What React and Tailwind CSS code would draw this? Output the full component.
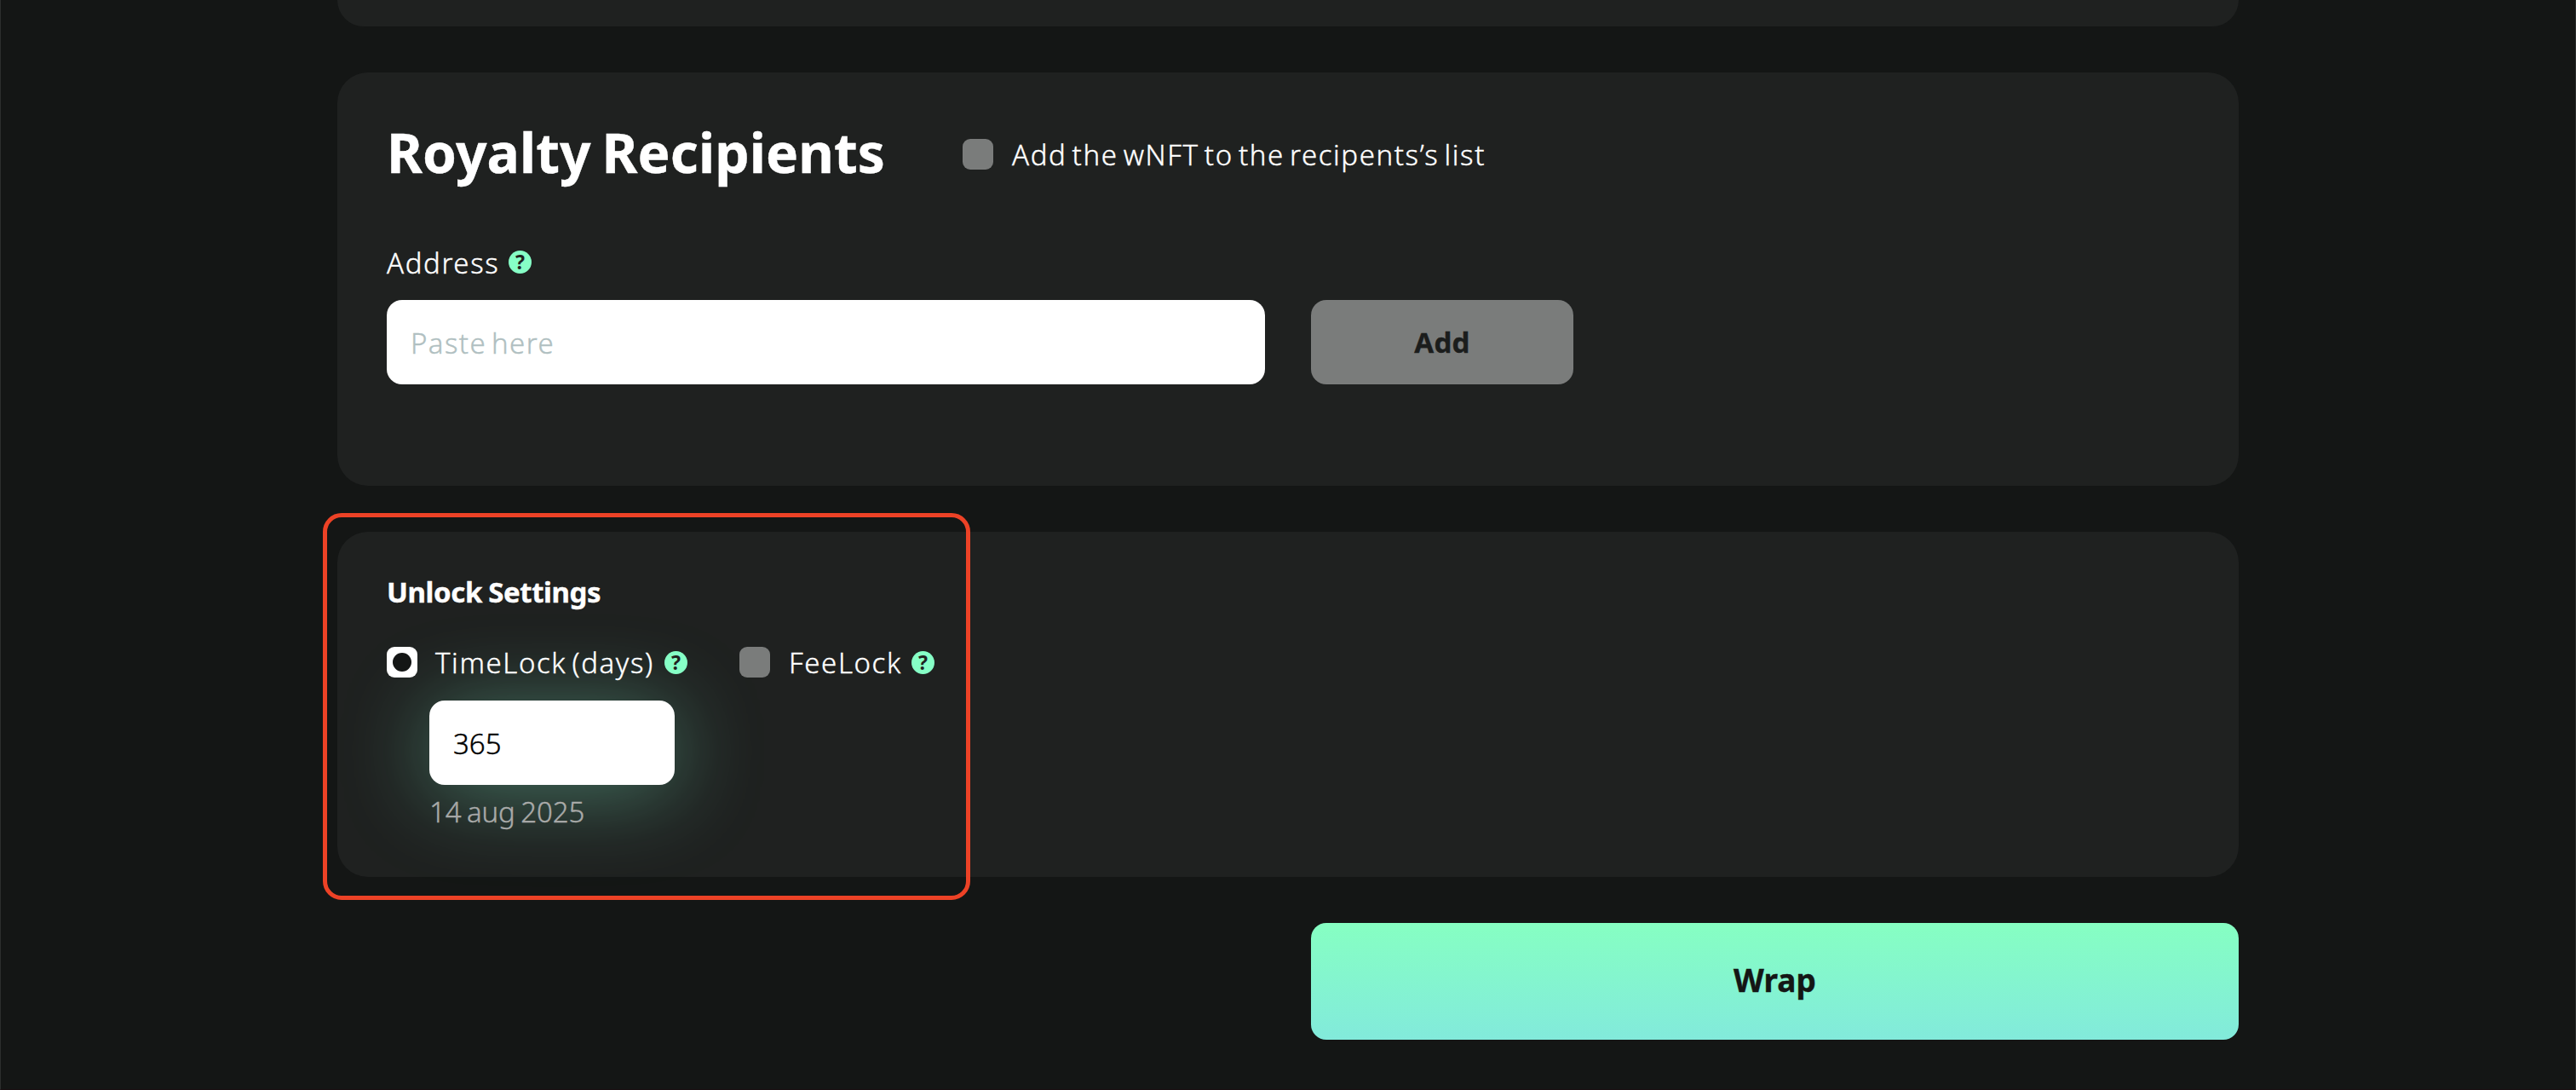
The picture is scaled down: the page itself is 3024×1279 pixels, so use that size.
const HelpIcon = () => (
  <span className="flex h-[27px] w-[27px] shrink-0 items-center justify-center rounded-full bg-[#86ffc6] text-[23px] leading-[27px] font-bold tracking-normal text-[#1f2120] [-webkit-text-stroke:0px]">
    ?
  </span>
)

const Checkbox = ({ checked }) => (
  <span
    className={
      checked
        ? "flex h-9 w-9 shrink-0 items-center justify-center rounded-[9px] bg-white"
        : "flex h-9 w-9 shrink-0 rounded-[9px] bg-[#7a7c7b]"
    }
  >
    {checked && <span className="h-[22px] w-[22px] rounded-full bg-[#141615]" />}
  </span>
)

const App = () => {
  return (
    <div className="h-[1279px] overflow-hidden border-x border-b border-x-[#2c2e2d] border-b-[#1a0f12] bg-[#141615] font-['Noto_Sans',sans-serif] text-[33px] leading-[40px] font-light tracking-[1.6px] [word-spacing:-4px] text-white [-webkit-text-stroke:0.4px]">
      <div className="mx-auto flex w-[2232px] flex-col">
        {/* Previous section */}
        <div className="h-[31px] rounded-b-[36px] bg-[#1f2120]" />

        {/* Royalty Recipients */}
        <div className="mt-[54px] h-[485px] rounded-[36px] bg-[#1f2120] px-[58px] pt-[54px]">
          <div className="flex h-[84px] items-center">
            <h2 className="w-[676px] pb-1 text-[64px] leading-[80px] font-bold tracking-[0.1px] [word-spacing:-4px] whitespace-nowrap">
              Royalty Recipients
            </h2>
            <Checkbox />
            <span className="ml-[22px] pt-[2px] whitespace-nowrap">Add the wNFT to the recipents’s list</span>
          </div>
          <div className="mt-[64px] flex h-10 items-center">
            <span className="w-[143px] pt-[3px]">Address</span>
            <HelpIcon />
          </div>
          <div className="mt-[25px] flex gap-[54px]">
            <input
              className="h-[99px] w-[1031px] rounded-[18px] bg-white px-[28px] pt-[2px] tracking-[1.4px] [word-spacing:-4px] text-black placeholder:text-[#b0bfc1]"
              placeholder="Paste here"
            />
            <button className="h-[99px] w-[308px] rounded-[18px] bg-[#7a7c7b] font-bold tracking-[0.3px] text-[#1b1d1c]">
              Add
            </button>
          </div>
        </div>

        {/* Unlock Settings */}
        <div className="relative mt-[54px] h-[405px] rounded-[36px] bg-[#1f2120] px-[58px] pt-[51px]">
          <h3 className="font-bold tracking-[-0.4px] [word-spacing:-1px]">Unlock Settings</h3>
          <div className="mt-[42px] flex">
            <div className="w-[414px]">
              <div className="relative z-10 flex h-10 items-center">
                <Checkbox checked />
                <span className="ml-[21px] w-[269px] pt-[2px] whitespace-nowrap">TimeLock (days)</span>
                <HelpIcon />
              </div>
              <div className="mt-[25px] ml-[50px]">
                <input
                  className="block h-[99px] w-[288px] rounded-[18px] bg-white px-[28px] pt-[2px] tracking-normal text-black shadow-[0_9px_100px_rgba(133,255,210,0.38)]"
                  defaultValue="365"
                />
                <p className="relative mt-[12px] tracking-[-0.1px] [word-spacing:-2px] text-[#a9aaa9]">14 aug 2025</p>
              </div>
            </div>
            <div className="flex h-10 items-center">
              <Checkbox />
              <span className="ml-[22px] w-[144px] pt-[2px]">FeeLock</span>
              <HelpIcon />
            </div>
          </div>
          {/* Highlight frame */}
          <div className="absolute -top-[22px] -left-[17px] h-[454px] w-[760px] rounded-[22px] border-[5px] border-[#ed4226]" />
        </div>

        <button className="mt-[54px] h-[137px] w-[1089px] self-end rounded-[18px] bg-linear-to-b from-[#86ffc2] to-[#82eadb] pb-1 text-[37px] font-bold tracking-normal text-[#141615]">
          Wrap
        </button>
      </div>
    </div>
  )
}

export default App
